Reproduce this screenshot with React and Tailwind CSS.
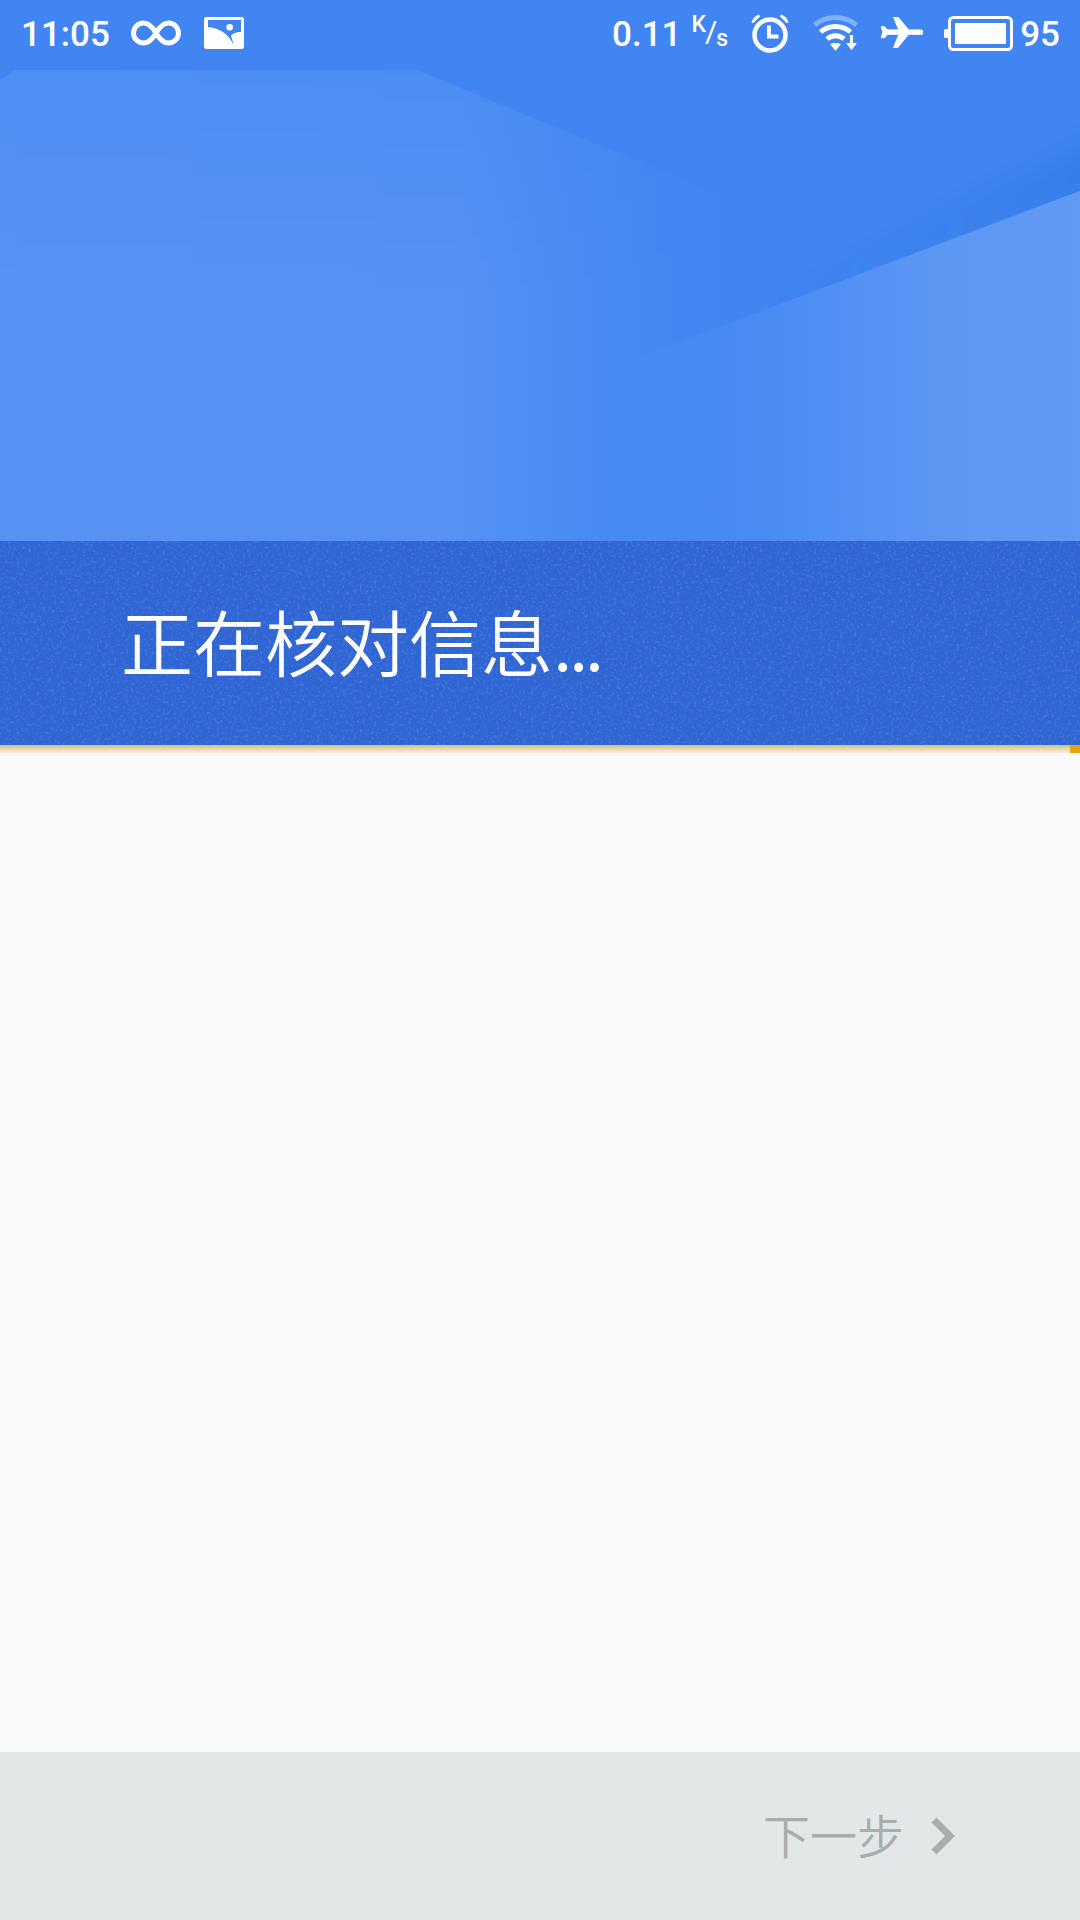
import React from 'react'

function HeroShapes() {
  return (
    <svg className="absolute inset-0 w-full h-full" viewBox="0 0 1080 541" preserveAspectRatio="none">
      <defs>
        <linearGradient id="left" x1="0" y1="0" x2="1000" y2="0" gradientUnits="userSpaceOnUse">
          <stop offset="0" stopColor="#fff" stopOpacity="0.12" />
          <stop offset="0.46" stopColor="#fff" stopOpacity="0.11" />
          <stop offset="0.56" stopColor="#fff" stopOpacity="0.06" />
          <stop offset="0.72" stopColor="#fff" stopOpacity="0.01" />
          <stop offset="0.82" stopColor="#fff" stopOpacity="0" />
        </linearGradient>
        <linearGradient id="fadeTop" x1="0" y1="70" x2="0" y2="300" gradientUnits="userSpaceOnUse">
          <stop offset="0" stopColor="#fff" stopOpacity="0.65" />
          <stop offset="1" stopColor="#fff" stopOpacity="1" />
        </linearGradient>
        <mask id="topMask" maskUnits="userSpaceOnUse" x="0" y="0" width="1080" height="541">
          <rect width="1080" height="541" fill="url(#fadeTop)" />
        </mask>
        <linearGradient id="right" x1="623" y1="0" x2="1080" y2="0" gradientUnits="userSpaceOnUse">
          <stop offset="0" stopColor="#fff" stopOpacity="0" />
          <stop offset="0.3" stopColor="#fff" stopOpacity="0.05" />
          <stop offset="0.72" stopColor="#fff" stopOpacity="0.15" />
          <stop offset="1" stopColor="#fff" stopOpacity="0.17" />
        </linearGradient>
        <linearGradient id="shade" x1="760" y1="0" x2="1080" y2="0" gradientUnits="userSpaceOnUse">
          <stop offset="0" stopColor="#1c4fb0" stopOpacity="0" />
          <stop offset="1" stopColor="#1c4fb0" stopOpacity="0.12" />
        </linearGradient>
        <filter id="soft">
          <feGaussianBlur stdDeviation="10" />
        </filter>
        <clipPath id="above">
          <path d="M0 0H1080V191L623 363H0Z" />
        </clipPath>
      </defs>
      <path d="M0 80L15 70H417L1000 310V541H0Z" fill="url(#left)" mask="url(#topMask)" />
      <g clipPath="url(#above)">
        <path d="M1100 135L720 330L1100 195Z" fill="url(#shade)" filter="url(#soft)" />
      </g>
      <path d="M1080 191L623 363V541H1080Z" fill="url(#right)" />
    </svg>
  )
}

function Speckle() {
  return (
    <svg className="absolute inset-0 w-full h-full opacity-20">
      <filter id="grain">
        <feTurbulence type="fractalNoise" baseFrequency="0.35" numOctaves="2" />
        <feColorMatrix values="0 0 0 0 1  0 0 0 0 1  0 0 0 0 1  0 0 0 2 -1.05" />
      </filter>
      <rect width="100%" height="100%" filter="url(#grain)" />
    </svg>
  )
}

function InfinityIcon() {
  return (
    <svg width="50" height="26" viewBox="0 0 50 26" fill="none" stroke="#fff" strokeWidth="5">
      <path d="M25 13C21 6 17 3 12.500 3a10 10 0 0 0 0 20C17 23 21 20 25 13C29 6 33 3 37.500 3a10 10 0 0 1 0 20C33 23 29 20 25 13Z" />
    </svg>
  )
}

function PictureIcon() {
  return (
    <svg width="40" height="32" viewBox="0 0 40 32">
      <rect width="40" height="32" rx="2.500" fill="#fff" />
      <path d="M4 3H37V15C32 15 28 17 27 19C28 22 29 25 29.500 28C26 19 17 11 4 10Z" fill="#4285f0" />
      <circle cx="25.700" cy="10.300" r="3.300" fill="#fff" />
    </svg>
  )
}

function AlarmIcon() {
  return (
    <svg width="40" height="40" viewBox="0 0 40 40" fill="none" stroke="#fff">
      <circle cx="20" cy="22" r="15.500" strokeWidth="4.500" />
      <path d="M19 12.500V23.500H28.500" strokeWidth="3.800" />
      <path d="M1.500 9.500C2.500 5.500 5 3 9 1.500L10 3.500L3.500 10Z" fill="#fff" stroke="none" />
      <path d="M38.500 9.500C37.500 5.500 35 3 31 1.500L30 3.500L36.500 10Z" fill="#fff" stroke="none" />
    </svg>
  )
}

function WifiIcon() {
  return (
    <svg width="46" height="38" viewBox="0 0 46 38" fill="none" stroke="#fff">
      <path d="M1.500 11C13 1 31 1 43.500 11" strokeWidth="5" strokeOpacity="0.35" />
      <path d="M7.500 18C16 10.500 29 10.500 37.500 18" strokeWidth="5" />
      <path d="M14 25C19 20.500 26 20.500 31 25" strokeWidth="5" />
      <path d="M17 30C20 28.500 25 28.500 28 30L22.500 37Z" fill="#fff" stroke="none" />
      <path d="M38.500 21V32" strokeWidth="3" />
      <path d="M33 29H44L38.500 36Z" fill="#fff" stroke="none" />
    </svg>
  )
}

function PlaneIcon() {
  return (
    <svg width="42" height="32" viewBox="2 2 20 20" preserveAspectRatio="none" fill="#fff" stroke="#fff" strokeWidth="0.5">
      <path transform="rotate(90 12 12)" d="M21 16v-2l-8-5V3.500c0-.83-.67-1.500-1.500-1.500S10 2.670 10 3.500V9l-8 5v2l8-2.500V19l-2 1.500V22l3.500-1 3.500 1v-1.500L13 19v-5.500l8 2.500z" />
    </svg>
  )
}

function BatteryIcon() {
  return (
    <svg width="69" height="35" viewBox="0 0 69 35" fill="none">
      <rect x="0" y="13" width="5" height="9" rx="1.500" fill="#fff" />
      <rect x="5.500" y="1.500" width="62" height="32" rx="4" stroke="#fff" strokeWidth="3" />
      <rect x="11" y="7" width="51" height="21" rx="1" fill="#fff" />
    </svg>
  )
}

export default function App() {
  return (
    <div className="w-[1080px] h-[1920px] flex flex-col bg-[#fafafa] font-['Noto_Sans_CJK_SC',sans-serif]">
      <div className="relative h-[541px] bg-[#4085f2] overflow-hidden">
        <HeroShapes />
        <div className="relative h-[66px] pl-[21px] pr-[20px] flex items-center justify-between text-white font-['Roboto',sans-serif] font-medium text-[35px]">
          <div className="flex items-center">
            <span className="pt-[4px]">11:05</span>
            <span className="ml-[21px] flex"><InfinityIcon /></span>
            <span className="ml-[23px] flex"><PictureIcon /></span>
          </div>
          <div className="flex items-center">
            <span className="pt-[4px]">0.11</span>
            <span className="ml-[10px] flex items-start text-[23px] leading-none">
              <span className="-mt-[4px]">K</span>
              <span className="font-normal text-[30px] -mx-[1px]">/</span>
              <span className="mt-[10px]">s</span>
            </span>
            <span className="ml-[22px] flex"><AlarmIcon /></span>
            <span className="ml-[23px] flex"><WifiIcon /></span>
            <span className="ml-[22px] flex"><PlaneIcon /></span>
            <span className="ml-[21px] flex"><BatteryIcon /></span>
            <span className="ml-[7px] pt-[4px]">95</span>
          </div>
        </div>
      </div>

      <div className="relative h-[204px] bg-[#3066d4] flex items-center pl-[121px]">
        <Speckle />
        <span className="relative -mt-[6px] text-white text-[72px] font-[350] leading-none">
          正在核对信息<span className="tracking-[-3.5px]">...</span>
        </span>
      </div>

      <div className="h-[8px] flex">
        <div className="flex-1 bg-gradient-to-b from-[#d4bf7f] to-[#f6f0de]" />
        <div className="w-[10px] bg-[#e5a50a]" />
      </div>

      <div className="flex-1" />

      <div className="h-[168px] bg-[#e3e7e8] flex items-center justify-end pr-[125px]">
        <span className="-mt-[6px] text-[47px] text-[#a9adae] font-[350] leading-none">下一步</span>
        <svg className="ml-[25px]" width="26" height="38" viewBox="0 0 26 38" fill="none" stroke="#a9adae" strokeWidth="7">
          <path d="M5 3L21 19L5 35" />
        </svg>
      </div>
    </div>
  )
}
